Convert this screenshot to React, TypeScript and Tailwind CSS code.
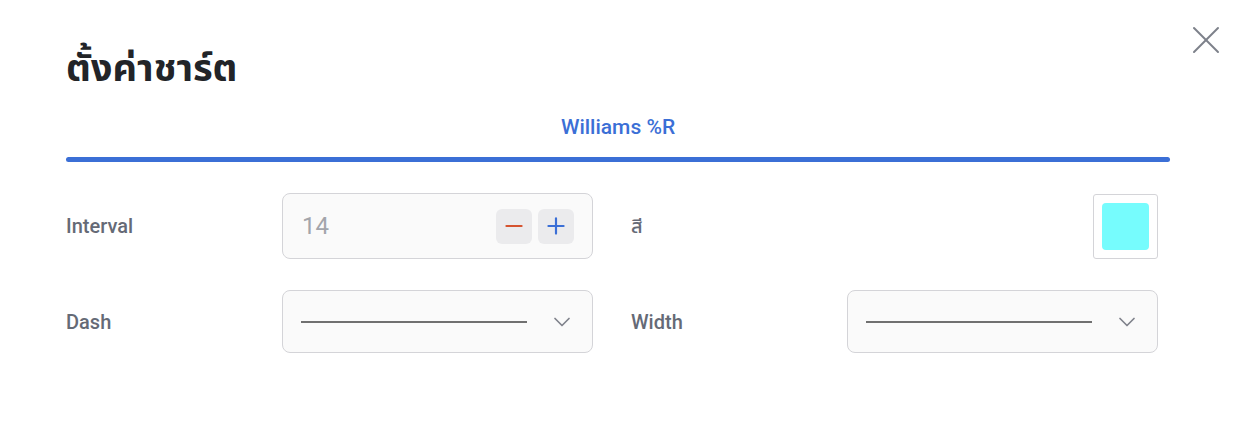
import { X, Minus, Plus, ChevronDown } from "lucide-react";

function Label({ children }: { children: React.ReactNode }) {
  return <div className="w-[216px] text-[20px] font-medium text-[#656a76]">{children}</div>;
}

function LineSelect() {
  return (
    <div className="flex h-[63px] w-[311px] items-center rounded-lg border border-[#d4d4d8] bg-[#fafafa] pl-[18px] pr-[16px]">
      <div className="h-[2px] w-[226px] bg-[#707070]" />
      <ChevronDown className="ml-auto h-7 w-7 text-[#80838c]" strokeWidth={1.5} />
    </div>
  );
}

export default function App() {
  return (
    <div
      className="relative h-[434px] w-[1242px] bg-white pl-[66px] pr-[72px] pt-[44px]"
      style={{ fontFamily: "Roboto, 'Noto Sans', 'Noto Sans Thai', sans-serif" }}
    >
      <button className="absolute right-[12px] top-[16px] text-[#7d818a]">
        <X className="h-[48px] w-[48px]" strokeWidth={1} />
      </button>
      <h1 className="text-[38px] font-bold leading-[48px] text-[#222428]">ตั้งค่าชาร์ต</h1>

      {/* tab */}
      <div className="mt-[20px] flex flex-col items-center">
        <div className="pb-[15px] text-[21px] font-medium leading-[30px] text-[#3b6fd6]">Williams %R</div>
        <div className="h-[5px] w-full rounded-full bg-[#3b6fd6]" />
      </div>

      <div className="mt-[31px] grid grid-cols-[527px_527px] gap-x-[38px] gap-y-[31px]">
        {/* Interval */}
        <div className="flex items-center">
          <Label>Interval</Label>
          <div className="flex h-[66px] w-[311px] items-center rounded-lg border border-[#d4d4d8] bg-[#fafafa] pl-[19px] pr-[18px]">
            <span className="text-[24px] text-[#a3a5ab]">14</span>
            <div className="ml-auto flex gap-[6px]">
              <div className="flex h-[35px] w-[36px] items-center justify-center rounded-md bg-[#ebebed]">
                <Minus className="h-[26px] w-[26px] text-[#d5532f]" strokeWidth={2} />
              </div>
              <div className="flex h-[35px] w-[36px] items-center justify-center rounded-md bg-[#ebebed]">
                <Plus className="h-[26px] w-[26px] text-[#3b6fd6]" strokeWidth={2} />
              </div>
            </div>
          </div>
        </div>

        {/* colour */}
        <div className="flex items-center">
          <Label>สี</Label>
          <div className="ml-auto flex h-[65px] w-[65px] items-center justify-center rounded-[3px] border border-[#d4d4d8] bg-white">
            <div className="h-[47px] w-[47px] rounded-[4px] bg-[#76fcfd]" />
          </div>
        </div>

        {/* Dash */}
        <div className="flex items-center">
          <Label>Dash</Label>
          <LineSelect />
        </div>

        {/* Width */}
        <div className="flex items-center">
          <Label>Width</Label>
          <LineSelect />
        </div>
      </div>
    </div>
  );
}
